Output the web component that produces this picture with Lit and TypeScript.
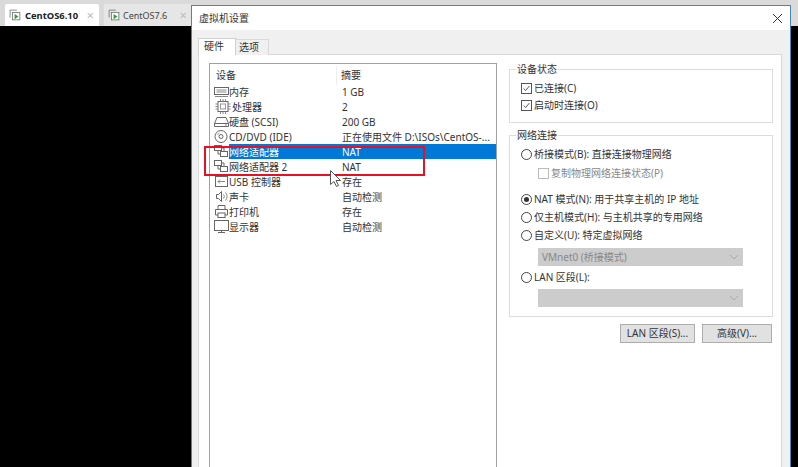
import { LitElement, html, css, svg } from "lit";
import { customElement } from "lit/decorators.js";

const ico = (c: unknown, wide = false) => html`<svg class="ico ${wide ? "wide" : ""}" viewBox="${wide ? "-1.500 0 18 15" : "0 0 15 15"}" fill="none" stroke="#666" stroke-width="1">${c}</svg>`;
const icons: Record<string, unknown> = {
  mem: svg`<rect x="0.5" y="3.5" width="14" height="7" /><path d="M2.5 6h10M2.5 8h10M1 12.5h13" stroke="#888"/>`,
  cpu: svg`<rect x="2.500" y="2.500" width="10" height="10" /><rect x="5" y="5" width="5" height="5" stroke="#999"/><path d="M5 0v2.500M7.500 0v2.500M10 0v2.500M5 12.500v2.500M7.500 12.500v2.500M10 12.500v2.500M0 5h2.500M0 7.500h2.500M0 10h2.500M12.500 5h2.500M12.500 7.500h2.500M12.500 10h2.500" stroke="#888"/>`,
  disk: svg`<path d="M3 3.500h9l2.500 6v3h-14v-3z"/><path d="M0.500 9.500h14"/><path d="M11 11h2" stroke="#888"/>`,
  cd: svg`<circle cx="7" cy="7.500" r="6"/><circle cx="7" cy="7.500" r="2" /><path d="M3.500 6a4 4 0 0 1 2-2" stroke="#999"/>`,
  net: svg`<rect x="0.500" y="1.500" width="7" height="5" fill="#fff"/><rect x="6.500" y="7.500" width="7" height="5" fill="#fff"/><path d="M4 7v3h2M10 7V4H8"/>`,
  usb: svg`<rect x="1.500" y="2.500" width="12" height="10"/><path d="M4 7.500h7M4 7.500l2-2M4 7.500l2 2" stroke="#888"/>`,
  snd: svg`<path d="M2.500 5.500h2l3-3v10l-3-3h-2z"/><path d="M9.500 5.500a3 3 0 0 1 0 4M11.500 3.500a6 6 0 0 1 0 8" stroke="#888"/>`,
  prn: svg`<path d="M4 5V1.500h7V5M4 11H1.500V5.500h12V11H11"/><rect x="4" y="9" width="7" height="4.500"/>`,
  disp: svg`<rect x="0.500" y="1.500" width="14" height="10"/><path d="M4 13.500h7M7.500 11.500v2"/>`,
};

const rows = [
  ["mem", "内存", "1 GB"],
  ["cpu", "处理器", "2"],
  ["disk", "硬盘 (SCSI)", "200 GB"],
  ["cd", "CD/DVD (IDE)", "正在使用文件 D:\\ISOs\\CentOS-..."],
  ["net", "网络适配器", "NAT"],
  ["net", "网络适配器 2", "NAT"],
  ["usb", "USB 控制器", "存在"],
  ["snd", "声卡", "自动检测"],
  ["prn", "打印机", "存在"],
  ["disp", "显示器", "自动检测"],
];

const chevron = html`<svg class="chev" viewBox="0 0 10 6" fill="none" stroke="#aaa"><path d="M1 1l4 4 4-4"/></svg>`;
const tabIcon = html`<svg class="tabico" viewBox="0 0 16 16" fill="none"><path d="M1.500 11.500v-10h9" stroke="#666"/><rect x="4.500" y="4.500" width="10" height="10" fill="#fff" stroke="#666"/><path d="M7.500 6.500l5 3.500-5 3.500z" fill="#2f9a36"/></svg>`;

@customElement("app-root")
export class AppRoot extends LitElement {
  static styles = css`
    :host { display: block; position: relative; width: 798px; height: 467px; overflow: hidden; background: #000;
      font: 10px/15px "Noto Sans", "Noto Sans CJK SC", sans-serif; color: #333; }
    .topbar { height: 26px; background: #dadada; display: flex; gap: 5px; padding: 4px 0 0 5px; box-sizing: border-box; }
    .ttab { width: 94px; height: 22px; background: #fff; display: flex; align-items: center; box-sizing: border-box; padding: 0 5px 0 4px; gap: 4px; border-radius: 2px 2px 0 0; font-weight: 700; color: #222; font-size: 9.400px; }
    .ttab.off { width: 88px; background: #e6e6e6; font-weight: 400; color: #444; font-size: 9px; gap: 3px; }
    .ttab .x { margin-left: auto; color: #bbb; font-size: 13px; font-weight: 400; }
    .tabico { width: 12px; height: 12px; flex: none; }
    .dialog { position: absolute; left: 191px; top: 5px; width: 600px; height: 480px; box-sizing: border-box; border: 1px solid #4a84b8; background: #f0f0f0; display: flex; flex-direction: column; }
    .title { height: 24px; flex: none; background: #fff; display: flex; align-items: center; padding-left: 7px; justify-content: space-between; padding-right: 7px; padding-top: 1px; box-sizing: border-box; color: #333; }
    .body { padding: 7px 8px 0 6px; flex: 1; display: flex; flex-direction: column; }
    .tabs { display: flex; height: 18px; align-items: flex-end; margin-bottom: -1px; position: relative; }
    .tab { height: 14px; padding: 0 9px 1px 3px; box-sizing: content-box; border: 1px solid #d9d9d9; border-bottom: none; background: #f0f0f0; display: flex; align-items: center; margin-left: -1px; }
    .tab.on { height: 17px; background: #fff; padding: 0 11px 2px 5px; box-sizing: border-box; width: 38px; margin-left: 0; position: relative; z-index: 1; border-color: #d0d0d0; }
    .panel { flex: 1; background: #fff; border: 1px solid #d9d9d9; display: flex; padding: 8px 7px 0 10px; gap: 12px; }
    .list { width: 288px; flex: none; height: 420px; border: 1px solid #a0a0a8; box-sizing: border-box; padding-top: 2px; }
    .head { display: grid; grid-template-columns: 127px 1fr; height: 18px; line-height: 19px; }
    .head span { padding-left: 6px; border-right: 1px solid #eee; }
    .head span + span { padding-left: 4px; border: none; }
    .row { display: grid; grid-template-columns: 131px 1fr; height: 15px; align-items: center; white-space: nowrap; }
    .row .name { display: flex; align-items: center; padding-left: 4px; }
    .row .sum { padding-left: 1px; }
    .row .nm, .row .sum { height: 15px; line-height: 17px; }
    .ico { width: 15px; height: 15px; flex: none; }
    .ico.wide { width: 18px; }
    .sel .nm, .sel .sum { background: #0078d7; color: #fff; }
    .sel .nm { flex: 1; }
    .right { width: 264px; flex: none; display: flex; flex-direction: column; }
    .group { border: 1px solid #dcdcdc; position: relative; box-sizing: border-box; }
    .group .lg { position: absolute; left: 6px; top: -8px; background: #fff; padding: 0 1px; }
    .g1 { height: 54px; margin-top: 6px; padding: 10px 0 0 11px; }
    .g1 .opt { height: 17px; }
    .g2 { height: 182px; margin-top: 12px; padding: 9px 0 0 11px; }
    .opt { display: flex; align-items: center; height: 18px; gap: 2px; white-space: nowrap; }
    .cb { width: 11px; height: 11px; border: 1px solid #555; box-sizing: border-box; display: flex; flex: none; }
    .cb svg { width: 9px; height: 9px; }
    .cb.dis { border-color: #bbb; }
    .dis { color: #888; }
    .rd { width: 11px; height: 11px; border: 1px solid #444; box-sizing: border-box; border-radius: 50%; flex: none; display: flex; align-items: center; justify-content: center; }
    .rd i { width: 5px; height: 5px; background: #333; border-radius: 50%; }
    .sub { padding-left: 17px; margin: 2px 0 8px; height: 17px; }
    .sel2 { width: 205px; height: 18px; background: #ccc; margin: 4px 0 0 17px; display: flex; align-items: center; justify-content: space-between; padding: 0 4px; box-sizing: border-box; color: #888; }
    .lan { height: 16px; margin-top: 3px; }
    .chev { width: 10px; height: 6px; }
    .btns { display: flex; justify-content: flex-end; gap: 7px; margin-top: 7px; padding-right: 1px; }
    .btn { height: 19px; background: #e1e1e1; border: 1px solid #adadad; box-sizing: border-box; display: flex; align-items: center; justify-content: center; }
    .b1 { width: 75px; }
    .b2 { width: 70px; }
    .red { position: absolute; left: 204px; top: 146px; width: 221px; height: 30px; border: 2px solid #e81123; box-sizing: border-box; }
    .cursor { position: absolute; left: 330px; top: 170px; width: 12px; height: 17px; }
  `;
  render() {
    const check = html`<svg viewBox="0 0 11 11" fill="none" stroke="#333"><path d="M2 5.500l2.500 2.500L9 2.500"/></svg>`;
    return html`
      <div class="topbar">
        <div class="ttab">${tabIcon}<span>CentOS6.10</span><span class="x">×</span></div>
        <div class="ttab off">${tabIcon}<span>CentOS7.6</span><span class="x">×</span></div>
      </div>
      <div class="dialog">
        <div class="title"><span>虚拟机设置</span>
          <svg width="11" height="11" viewBox="0 0 11 11" stroke="#333" fill="none"><path d="M1 1l9 9M10 1l-9 9"/></svg></div>
        <div class="body">
          <div class="tabs"><div class="tab on">硬件</div><div class="tab">选项</div></div>
          <div class="panel">
            <div class="list">
              <div class="head"><span>设备</span><span>摘要</span></div>
              <div class="rows">
                ${rows.map((r, i) => html`<div class="row ${i === 4 ? "sel" : ""}">
                  <div class="name">${ico(icons[r[0]], r[0] === "cpu")}<span class="nm">${r[1]}</span></div>
                  <div class="sum">${r[2]}</div></div>`)}
              </div>
            </div>
            <div class="right">
              <div class="group g1"><span class="lg">设备状态</span>
                <div class="opt"><span class="cb">${check}</span>已连接(C)</div>
                <div class="opt"><span class="cb">${check}</span>启动时连接(O)</div>
              </div>
              <div class="group g2"><span class="lg">网络连接</span>
                <div class="opt"><span class="rd"></span>桥接模式(B): 直接连接物理网络</div>
                <div class="opt sub dis"><span class="cb dis"></span>复制物理网络连接状态(P)</div>
                <div class="opt"><span class="rd"><i></i></span>NAT 模式(N): 用于共享主机的 IP 地址</div>
                <div class="opt"><span class="rd"></span>仅主机模式(H): 与主机共享的专用网络</div>
                <div class="opt"><span class="rd"></span>自定义(U): 特定虚拟网络</div>
                <div class="sel2"><span>VMnet0 (桥接模式)</span>${chevron}</div>
                <div class="opt lan"><span class="rd"></span>LAN 区段(L):</div>
                <div class="sel2"><span></span>${chevron}</div>
              </div>
              <div class="btns">
                <div class="btn b1">LAN 区段(S)...</div>
                <div class="btn b2">高级(V)...</div>
              </div>
            </div>
          </div>
        </div>
      </div>
      <div class="red"></div>
      <svg class="cursor" viewBox="0 0 12 17"><path d="M0.500 0.500v14l3.500-3 2.500 5 2-1-2.500-5h4.500z" fill="#fff" stroke="#555"/></svg>
    `;
  }
}
